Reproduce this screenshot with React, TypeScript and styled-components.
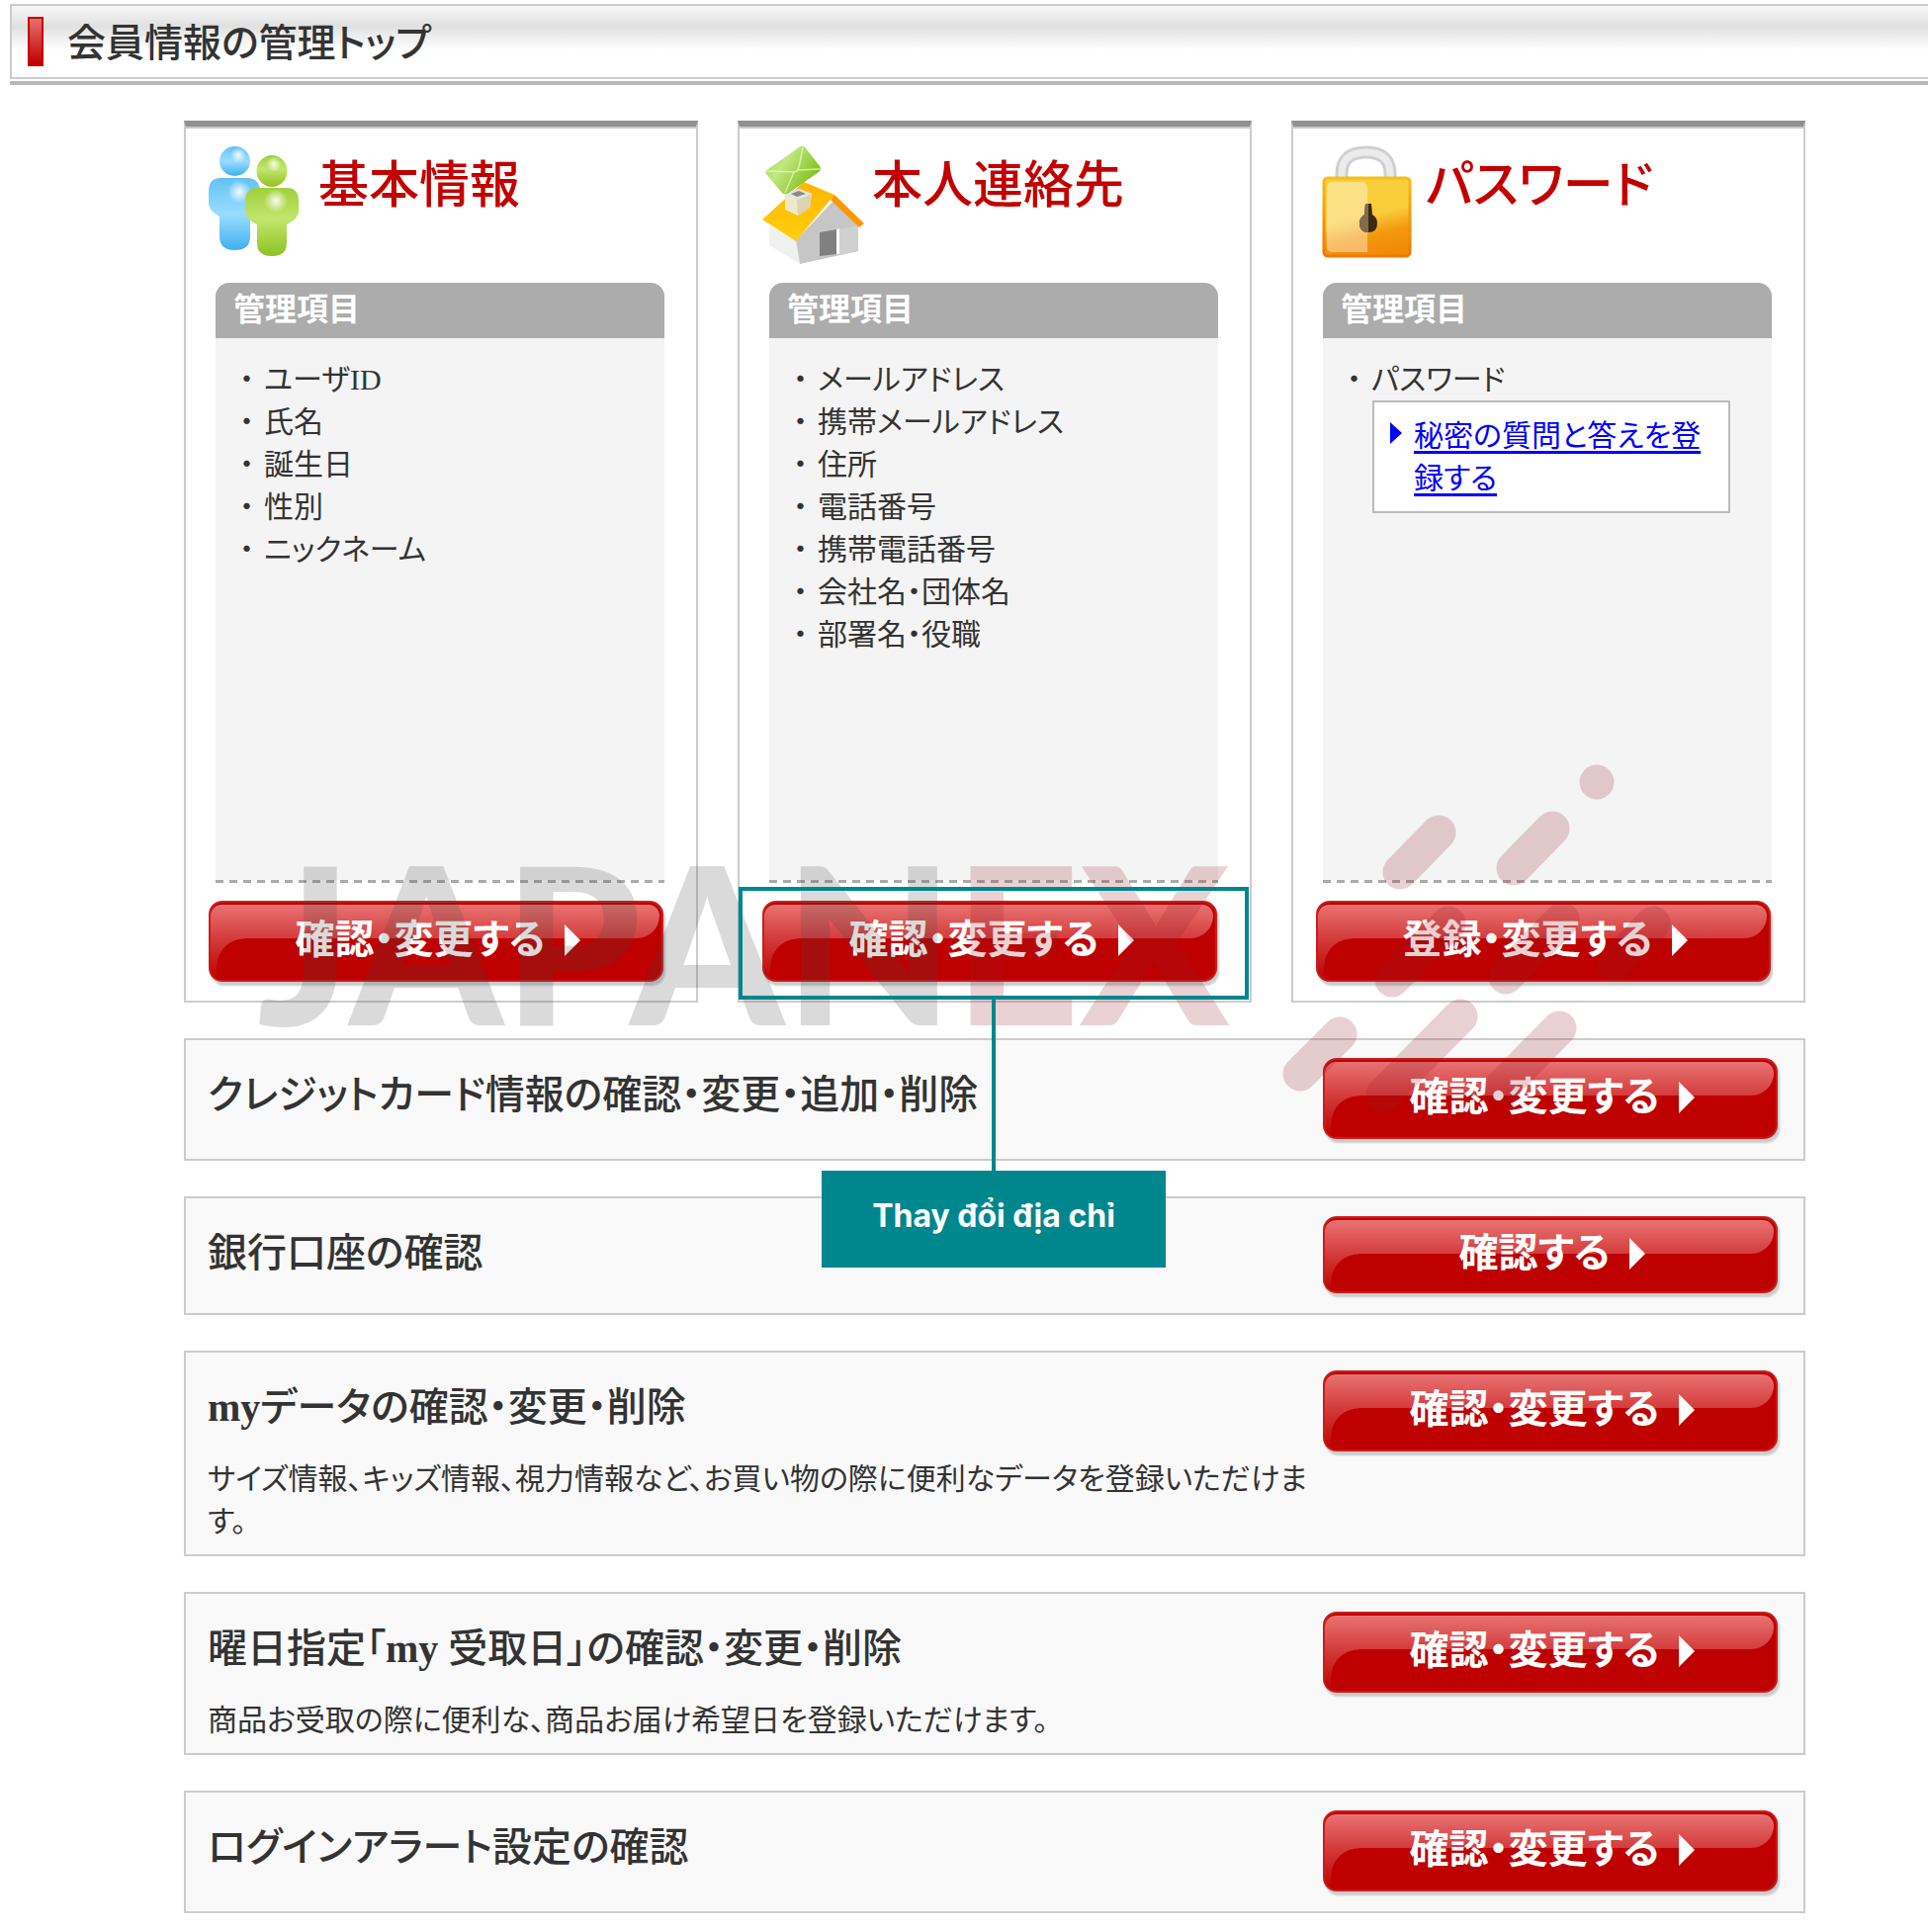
import React from "react";
import styled, { createGlobalStyle } from "styled-components";

const GlobalStyle = createGlobalStyle`
  *, *::before, *::after { box-sizing: border-box; }
  body {
    margin: 0;
    background: #fff;
    color: #333;
    font-family: "Liberation Serif", "Noto Sans CJK JP", sans-serif;
    font-feature-settings: "palt";
    font-size: 30px;
    line-height: 43px;
  }
  h1, h2, h3, p, ul { margin: 0; padding: 0; }
`;

const Page = styled.div`
  padding: 4px 0 18px;
  overflow: hidden;
`;

const TitleBar = styled.header`
  display: flex;
  align-items: center;
  gap: 24px;
  height: 76px;
  margin-left: 10px;
  padding-left: 16px;
  border: 2px solid #ccc;
  border-right: 0;
  background: linear-gradient(#f8f8f8, #e0e0e0 28%, #fff 62%);
  box-shadow: 0 2px 0 #fff, 0 6px 0 #b8b8b8;
`;

const TitleMark = styled.span`
  width: 16px;
  height: 50px;
  border: 2px solid #c80000;
  background: linear-gradient(#e87070, #be0000);
`;

const PageTitle = styled.h1`
  padding-top: 4px;
  font-size: 39px;
  line-height: 48px;
  font-weight: 500;
`;

const Main = styled.main`
  position: relative;
  display: flex;
  flex-direction: column;
  gap: 36px;
  margin-top: 42px;
  padding: 0 124px 0 186px;
`;

const Cards = styled.section`
  display: grid;
  grid-template-columns: repeat(3, minmax(0, 1fr));
  gap: 40px;
`;

const CardBox = styled.article`
  position: relative;
  display: flex;
  flex-direction: column;
  padding: 18px 0 19px;
  border: 2px solid #ccc;
  border-top: 6px solid #909090;
  box-shadow: inset 0 2px 0 #c8c8c8;
`;

const CardHead = styled.div`
  display: flex;
  gap: 4px;
  padding-left: 22px;
`;

const CardIcon = styled.svg`
  flex: none;
  width: 108px;
  height: 124px;
`;

const CardTitle = styled.h2`
  padding-top: 12px;
  color: #c30000;
  font-size: 51px;
  line-height: 60px;
  font-weight: 500;
`;

const Panel = styled.div`
  margin: 16px 32px 18px 30px;
  background: #f4f4f4;
  border-radius: 14px 14px 0 0;
`;

const PanelHead = styled.h3`
  padding: 7px 18px 9px;
  border-radius: 14px 14px 0 0;
  background: #acacac;
  color: #fff;
  font-size: 32px;
  line-height: 40px;
  font-weight: 700;
`;

const ItemList = styled.ul`
  min-height: 548px;
  padding: 20px 24px;
  list-style: none;
`;

const Item = styled.li`
  display: flex;
`;

const Bullet = styled.span`
  flex: none;
  width: 25px;
`;

const Divider = styled.div`
  height: 3px;
  background: repeating-linear-gradient(90deg, #aaa 0 8px, #fff 8px 14px);
`;

const LinkBox = styled.div`
  display: flex;
  gap: 12px;
  margin: 0 18px 0 26px;
  padding: 12px 6px 12px 16px;
  border: 2px solid #bbb;
  background: #fff;
`;

const LinkArrow = styled.svg`
  flex: none;
  width: 12px;
  height: 22px;
  margin-top: 8px;
  fill: #00f;
`;

const TextLink = styled.a`
  color: #00f;
  text-decoration: underline;
  text-decoration-thickness: 3px;
  text-underline-offset: 5px;
`;

const RedButton = styled.button<{ $height?: number }>`
  position: relative;
  display: flex;
  align-items: center;
  justify-content: center;
  gap: 20px;
  width: 460px;
  height: ${(p) => p.$height ?? 82}px;
  padding: 0 0 2px 4px;
  border: 2px solid #c81e1e;
  border-radius: 14px;
  background: #be0000;
  box-shadow: 2px 4px 2px #ccc;
  color: #fff;
  font: inherit;
  font-feature-settings: inherit;
  font-size: 40px;
  line-height: 48px;
  font-weight: 700;
  cursor: pointer;

  &::before {
    content: "";
    position: absolute;
    inset: 2px 2px auto 0;
    height: 34px;
    border-radius: 12px 12px 24px 0;
    background: linear-gradient(#e87272, #d43c3c);
  }

  &::after {
    content: "";
    position: absolute;
    left: 0;
    top: 36px;
    bottom: 0;
    width: 34px;
    border-bottom-left-radius: 12px;
    background:
      radial-gradient(circle at 100% 100%, #be0000 27px, transparent 28px) 6px 0 / 28px 28px no-repeat,
      linear-gradient(#be0000, #be0000) 6px 28px / 28px 100% no-repeat,
      linear-gradient(#d43c3c, #be0000);
  }
`;

const ButtonText = styled.span`
  position: relative;
  z-index: 1;
`;

const ButtonArrow = styled.svg`
  position: relative;
  z-index: 1;
  width: 16px;
  height: 32px;
  fill: #fff;
`;

const CardAction = styled.div`
  display: flex;
  justify-content: center;
  padding-right: 10px;
`;

const Row = styled.section`
  display: flex;
  align-items: flex-start;
  justify-content: space-between;
  padding: 18px 26px 12px 22px;
  border: 2px solid #ccc;
  background: #f9f9f9;
`;

const RowText = styled.div`
  flex: 1;
  min-width: 0;
  padding-top: 14px;
`;

const RowTitle = styled.h2`
  font-size: 40px;
  line-height: 48px;
  font-weight: 500;
`;

const Latin = styled.span`
  font-weight: 700;
`;

const RowNote = styled.p`
  margin-top: 26px;
`;

const RowAction = styled.div`
  flex: none;
  padding-bottom: 8px;
`;

const Callout = styled.div`
  position: absolute;
  z-index: 3;
  left: -1px;
  right: 1px;
  top: 769px;
  display: flex;
  flex-direction: column;
  align-items: center;
  pointer-events: none;
`;

const CalloutFrame = styled.div`
  align-self: stretch;
  height: 114px;
  border: 4px solid #00868d;
`;

const CalloutLine = styled.div`
  width: 4px;
  height: 173px;
  background: #00868d;
`;

const CalloutLabel = styled.div`
  width: 348px;
  padding: 24px 0 30px;
  background: #00868d;
  color: #fff;
  font-family: Inter, "Noto Sans", sans-serif;
  font-size: 32px;
  line-height: 44px;
  font-weight: 700;
  text-align: center;
`;

const Watermark = styled.div`
  position: absolute;
  z-index: 2;
  left: 260px;
  top: 646px;
  pointer-events: none;
`;

const Wordmark = styled.div`
  position: absolute;
  left: 0;
  top: 72px;
  color: rgba(70, 70, 70, 0.2);
  font-family: Lato, sans-serif;
  font-size: 222px;
  line-height: 222px;
  font-weight: 900;
  white-space: nowrap;
`;

const WordmarkAccent = styled.span`
  color: rgba(150, 30, 40, 0.2);
`;

const Streaks = styled.svg`
  position: absolute;
  left: 1030px;
  top: 0;
  width: 420px;
  height: 380px;
  fill: none;
  stroke: #961e28;
  stroke-width: 35;
  stroke-linecap: round;
  opacity: 0.2;
`;

const PeopleIcon = () => (
  <CardIcon viewBox="0 0 108 124" aria-hidden="true">
    <defs>
      <linearGradient id="blue" x1="0" y1="0" x2="0" y2="1">
        <stop offset="0" stopColor="#62c2f5" />
        <stop offset="0.5" stopColor="#9adcff" />
        <stop offset="1" stopColor="#3fb0ef" />
      </linearGradient>
      <linearGradient id="green" x1="0" y1="0" x2="0" y2="1">
        <stop offset="0" stopColor="#a0cf3a" />
        <stop offset="0.45" stopColor="#c2e56c" />
        <stop offset="1" stopColor="#8fc224" />
      </linearGradient>
      <radialGradient id="shine">
        <stop offset="0" stopColor="#fff" stopOpacity="0.9" />
        <stop offset="1" stopColor="#fff" stopOpacity="0" />
      </radialGradient>
    </defs>
    <ellipse cx="27.500" cy="17" rx="15.500" ry="15" fill="url(#blue)" />
    <path d="M13 34H40Q53 34 53 48V60Q53 67 43 73V93Q43 107 27.500 107Q12 107 12 93V73Q1 67 1 60V48Q1 34 13 34Z" fill="url(#blue)" />
    <circle cx="31" cy="11" r="8" fill="url(#shine)" />
    <circle cx="32" cy="48" r="12" fill="url(#shine)" />
    <ellipse cx="65" cy="27" rx="15.500" ry="16" fill="url(#green)" />
    <path d="M50 44H80Q92 44 92 57V68Q92 75 80 81V100Q80 113 65 113Q50 113 50 100V81Q38 75 38 68V57Q38 44 50 44Z" fill="url(#green)" />
    <circle cx="67" cy="20" r="8" fill="url(#shine)" />
    <circle cx="69" cy="57" r="12" fill="url(#shine)" />
  </CardIcon>
);

const HouseIcon = () => (
  <CardIcon viewBox="0 0 108 124" aria-hidden="true">
    <defs>
      <linearGradient id="mail" x1="0" y1="0" x2="1" y2="0.600">
        <stop offset="0" stopColor="#9cd846" />
        <stop offset="0.4" stopColor="#c0e880" />
        <stop offset="1" stopColor="#7cbc14" />
      </linearGradient>
      <linearGradient id="roof" x1="0" y1="0" x2="0" y2="1">
        <stop offset="0" stopColor="#ffb400" />
        <stop offset="1" stopColor="#ffd00e" />
      </linearGradient>
    </defs>
    <path d="M8 82L35 97L39 121L8 102Z" fill="#f0f0f0" />
    <path d="M35 97L74 56L98 82V108L39 121Z" fill="#c6c6c6" />
    <path d="M79 86L98 82V108L79 112Z" fill="#d0d0d0" />
    <path d="M59 89L76 86V111L59 113Z" fill="#808080" />
    <path d="M76 86L79 85V111L76 111Z" fill="#fff" />
    <path d="M1 76L43 38L74 51L35 98Z" fill="url(#roof)" />
    <path d="M74 51L104 80L99 84L74 60L70 56Z" fill="#ff9800" />
    <path d="M24 50L38 45L51 50L49 64L37 72L24 66Z" fill="#efe8cc" />
    <path d="M36 56L51 50L49 64L37 72Z" fill="#ddd3b0" />
    <path d="M24 50L38 45L51 50L36 56Z" fill="#e4e4e4" />
    <path d="M30 50L38 47L45 50L36 53Z" fill="#888" />
    <path d="M7 25L38 3Q42 0 45 4L59 22Q61 26 58 28L28 49Q23 52 20 48L5 30Q3 27 7 25Z" fill="url(#mail)" />
    <path d="M5 27L34 28Q37 27 38 23L42 3M24 49L33 28M59 25L37 26" fill="none" stroke="#e4f7bf" strokeWidth="1.500" opacity="0.800" />
  </CardIcon>
);

const LockIcon = () => (
  <CardIcon viewBox="0 0 108 124" aria-hidden="true">
    <defs>
      <linearGradient id="brass" x1="0.300" y1="0" x2="0.550" y2="1">
        <stop offset="0" stopColor="#f8cf38" />
        <stop offset="0.500" stopColor="#f9cc3a" />
        <stop offset="0.750" stopColor="#f5980f" />
        <stop offset="1" stopColor="#f28a08" />
      </linearGradient>
      <linearGradient id="rim" x1="0" y1="0" x2="0" y2="1">
        <stop offset="0" stopColor="#f6bd1c" />
        <stop offset="1" stopColor="#f07800" />
      </linearGradient>
    </defs>
    <path d="M27 36V30Q27 8 51.500 8Q76 8 76 30V36" fill="none" stroke="#cfcfcf" strokeWidth="13" />
    <path d="M27 36V30Q27 8 51.500 8Q76 8 76 30V36" fill="none" stroke="#ebebeb" strokeWidth="7" />
    <rect x="9" y="34" width="87" height="79" rx="4" fill="url(#brass)" stroke="url(#rim)" strokeWidth="3" />
    <path d="M18 38H47Q53 38 53 46V109H18Q12 109 12 103V44Q12 38 18 38Z" fill="#fff" opacity="0.380" />
    <path d="M51 60H57L58 71Q63 74 63 80Q63 89 54 89Q45 89 45 80Q45 74 50 71Z" fill="#3b2a10" />
    <path d="M51 60H54V89Q45 89 45 80Q45 74 50 71Z" fill="#806c50" />
  </CardIcon>
);

const ActionButton = ({ label, height }: { label: string; height?: number }) => (
  <RedButton type="button" $height={height}>
    <ButtonText>{label}</ButtonText>
    <ButtonArrow viewBox="0 0 16 32" aria-hidden="true">
      <path d="M0 0L16 16L0 32Z" />
    </ButtonArrow>
  </RedButton>
);

type CardProps = {
  icon: React.ReactNode;
  title: string;
  items: string[];
  action: string;
  link?: string;
  callout?: string;
};

const Card = ({ icon, title, items, action, link, callout }: CardProps) => (
  <CardBox>
    <CardHead>
      {icon}
      <CardTitle>{title}</CardTitle>
    </CardHead>
    <Panel>
      <PanelHead>管理項目</PanelHead>
      <ItemList>
        {items.map((item) => (
          <Item key={item}>
            <Bullet>・</Bullet>
            {item}
          </Item>
        ))}
        {link && (
          <li>
            <LinkBox>
              <LinkArrow viewBox="0 0 12 22" aria-hidden="true">
                <path d="M0 0L12 11L0 22Z" />
              </LinkArrow>
              <TextLink href="#secret">{link}</TextLink>
            </LinkBox>
          </li>
        )}
      </ItemList>
      <Divider />
    </Panel>
    <CardAction>
      <ActionButton label={action} />
    </CardAction>
    {callout && (
      <Callout>
        <CalloutFrame />
        <CalloutLine />
        <CalloutLabel>{callout}</CalloutLabel>
      </Callout>
    )}
  </CardBox>
);

const cards: CardProps[] = [
  {
    icon: <PeopleIcon />,
    title: "基本情報",
    items: ["ユーザID", "氏名", "誕生日", "性別", "ニックネーム"],
    action: "確認・変更する",
  },
  {
    icon: <HouseIcon />,
    title: "本人連絡先",
    items: [
      "メールアドレス",
      "携帯メールアドレス",
      "住所",
      "電話番号",
      "携帯電話番号",
      "会社名・団体名",
      "部署名・役職",
    ],
    action: "確認・変更する",
    callout: "Thay đổi địa chỉ",
  },
  {
    icon: <LockIcon />,
    title: "パスワード",
    items: ["パスワード"],
    link: "秘密の質問と答えを登録する",
    action: "登録・変更する",
  },
];

type RowData = {
  id: string;
  title: React.ReactNode;
  note?: string;
  action: string;
  height?: number;
};

const rows: RowData[] = [
  { id: "credit", title: "クレジットカード情報の確認・変更・追加・削除", action: "確認・変更する" },
  { id: "bank", title: "銀行口座の確認", action: "確認する", height: 78 },
  {
    id: "mydata",
    title: (
      <>
        <Latin>my</Latin>データの確認・変更・削除
      </>
    ),
    note: "サイズ情報、キッズ情報、視力情報など、お買い物の際に便利なデータを登録いただけます。",
    action: "確認・変更する",
  },
  {
    id: "myday",
    title: (
      <>
        曜日指定「<Latin>my</Latin> 受取日」の確認・変更・削除
      </>
    ),
    note: "商品お受取の際に便利な、商品お届け希望日を登録いただけます。",
    action: "確認・変更する",
  },
  { id: "alert", title: "ログインアラート設定の確認", action: "確認・変更する" },
];

export default function App() {
  return (
    <Page lang="ja">
      <GlobalStyle />
      <TitleBar>
        <TitleMark />
        <PageTitle>会員情報の管理トップ</PageTitle>
      </TitleBar>
      <Main>
        <Cards>
          {cards.map((card) => (
            <Card key={card.title} {...card} />
          ))}
        </Cards>
        {rows.map((row) => (
          <Row key={row.id}>
            <RowText>
              <RowTitle>{row.title}</RowTitle>
              {row.note && <RowNote>{row.note}</RowNote>}
            </RowText>
            <RowAction>
              <ActionButton label={row.action} height={row.height} />
            </RowAction>
          </Row>
        ))}
        <Watermark>
          <Wordmark>
            JAPAN<WordmarkAccent>EX</WordmarkAccent>
          </Wordmark>
          <Streaks viewBox="1290 768 420 380" aria-hidden="true">
            <path d="M1615 791h0M1455 842L1416 882M1570 838L1531 878M1465 934L1408 991M1580 930L1523 988M1672 934L1633 974M1355 1046L1315 1086M1477 1028L1399 1107M1577 1040L1519 1099" />
          </Streaks>
        </Watermark>
      </Main>
    </Page>
  );
}
